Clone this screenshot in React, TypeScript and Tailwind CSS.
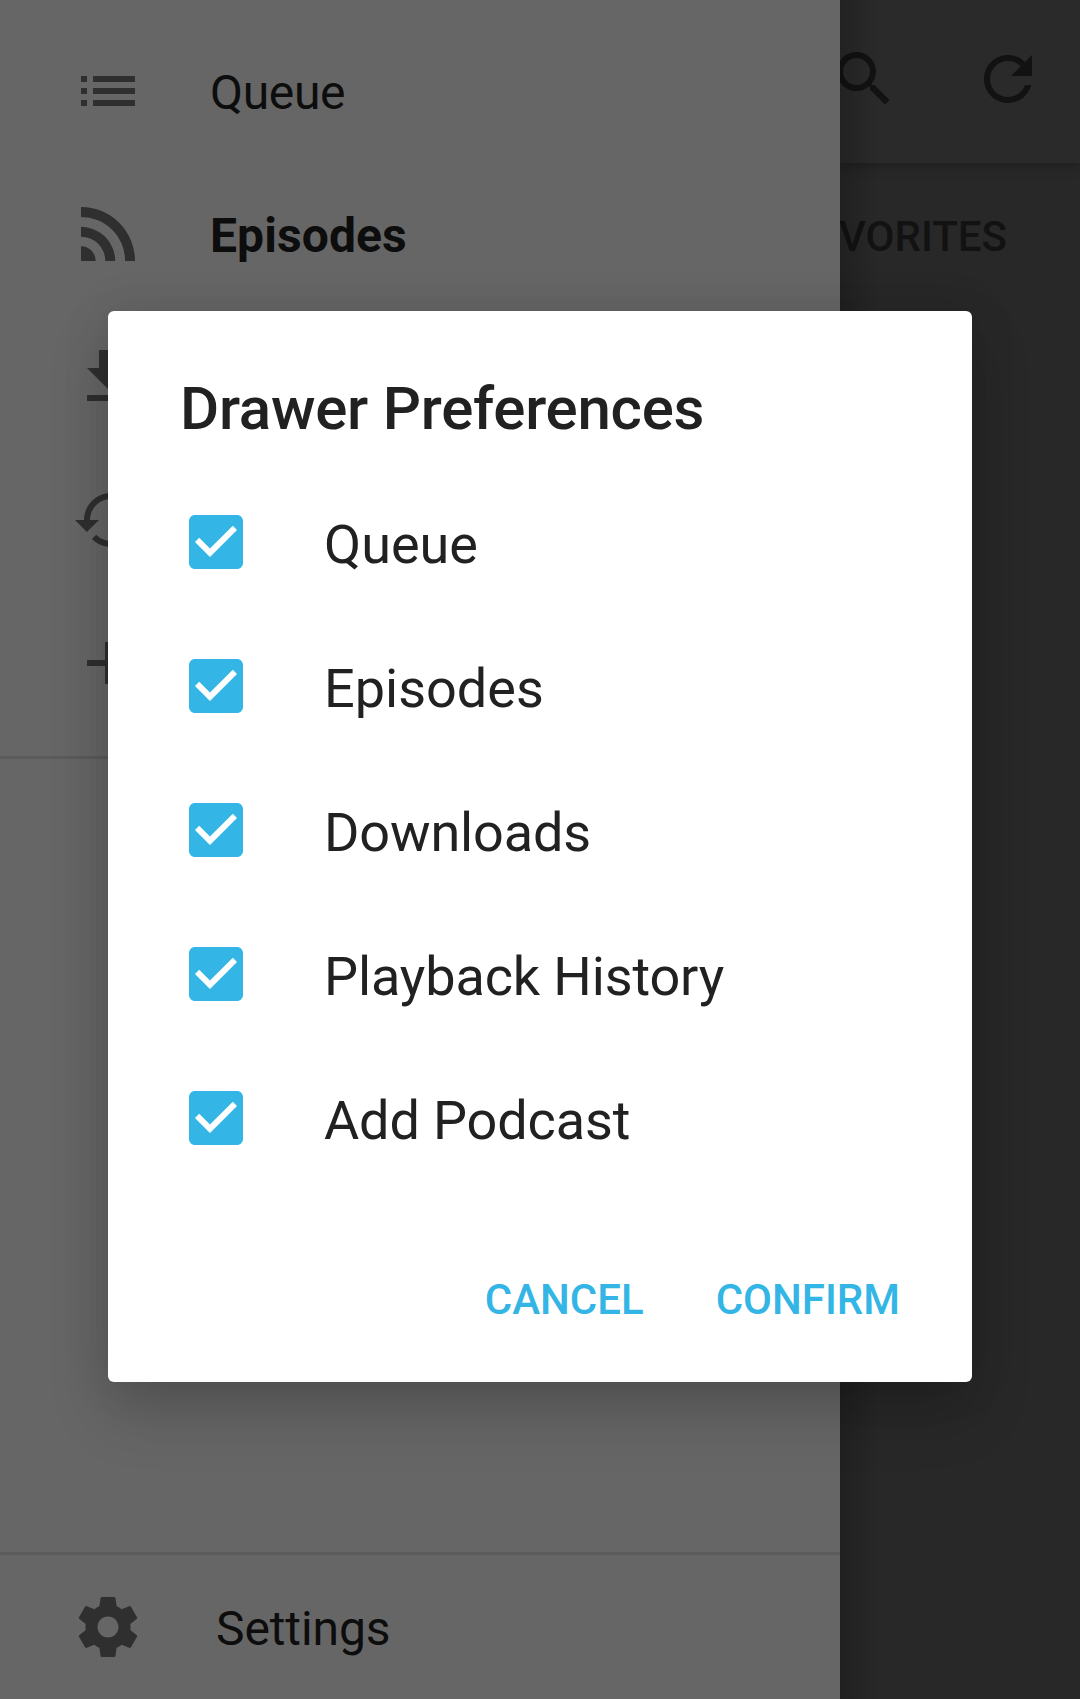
import React from "react";

const ICONS = {
  list: "M3 13h2v-2H3v2zm0 4h2v-2H3v2zm0-8h2V7H3v2zm4 4h14v-2H7v2zm0 4h14v-2H7v2zM7 7v2h14V7H7z",
  feed: "M3 16.1A4.9 4.9 0 0 1 7.9 21H3zM3 9.6A11.4 11.4 0 0 1 14.4 21H11.1A8.1 8.1 0 0 0 3 12.9zM3 3A18 18 0 0 1 21 21H17.7A14.7 14.7 0 0 0 3 6.3z",
  download: "M19 9h-4V3H9v6H5l7 7 7-7zM5 18v2h14v-2H5z",
  history:
    "M13 3c-4.97 0-9 4.03-9 9H1l3.89 3.89.07.14L9 12H6c0-3.87 3.13-7 7-7s7 3.13 7 7-3.13 7-7 7c-1.93 0-3.68-.79-4.94-2.06l-1.42 1.42C8.27 19.99 10.51 21 13 21c4.97 0 9-4.03 9-9s-4.03-9-9-9z",
  add: "M19 13h-6v6h-2v-6H5v-2h6V5h2v6h6v2z",
  search:
    "M15.5 14h-.79l-.28-.27C15.41 12.59 16 11.11 16 9.5 16 5.91 13.09 3 9.5 3S3 5.91 3 9.5 5.91 16 9.5 16c1.61 0 3.09-.59 4.23-1.57l.27.28v.79l5 4.99L20.49 19l-4.99-5zm-6 0C7.01 14 5 11.99 5 9.5S7.01 5 9.5 5 14 7.01 14 9.5 11.99 14 9.5 14z",
  refresh:
    "M17.65 6.35C16.2 4.9 14.21 4 12 4c-4.42 0-7.99 3.58-7.99 8s3.57 8 7.99 8c3.73 0 6.84-2.55 7.73-6h-2.08c-.82 2.33-3.04 4-5.65 4-3.31 0-6-2.69-6-6s2.69-6 6-6c1.66 0 3.14.69 4.22 1.78L13 11h7V4l-2.35 2.35z",
  settings:
    "M19.43 12.98c.04-.32.07-.64.07-.98s-.03-.66-.07-.98l2.11-1.65c.19-.15.24-.42.12-.64l-2-3.46c-.12-.22-.39-.3-.61-.22l-2.49 1c-.52-.4-1.08-.73-1.69-.98l-.38-2.65C14.46 2.18 14.25 2 14 2h-4c-.25 0-.46.18-.49.42l-.38 2.65c-.61.25-1.17.59-1.69.98l-2.49-1c-.23-.09-.49 0-.61.22l-2 3.46c-.13.22-.07.49.12.64l2.11 1.65c-.04.32-.07.65-.07.98s.03.66.07.98l-2.11 1.65c-.19.15-.24.42-.12.64l2 3.46c.12.22.39.3.61.22l2.49-1c.52.4 1.08.73 1.69.98l.38 2.65c.03.24.24.42.49.42h4c.25 0 .46-.18.49-.42l.38-2.65c.61-.25 1.17-.59 1.69-.98l2.49 1c.23.09.49 0 .61-.22l2-3.46c.12-.22.07-.49-.12-.64l-2.11-1.65zM12 15.5c-1.93 0-3.5-1.57-3.5-3.5s1.57-3.5 3.5-3.5 3.5 1.57 3.5 3.5-1.57 3.5-3.5 3.5z",
  checkbox:
    "M19 3H5c-1.11 0-2 .9-2 2v14c0 1.1.89 2 2 2h14c1.11 0 2-.9 2-2V5c0-1.1-.89-2-2-2zm-9 14l-5-5 1.41-1.41L10 14.17l7.59-7.59L19 8l-9 9z",
};

function Icon({ name, className = "" }: { name: keyof typeof ICONS; className?: string }) {
  return (
    <svg viewBox="0 0 24 24" fill="currentColor" className={`size-[72px] shrink-0 ${className}`}>
      <path d={ICONS[name]} />
    </svg>
  );
}

const NAV: { icon: keyof typeof ICONS; label?: string; active?: boolean }[] = [
  { icon: "list", label: "Queue" },
  { icon: "feed", label: "Episodes", active: true },
  { icon: "download" },
  { icon: "history" },
  { icon: "add" },
];

const OPTIONS = ["Queue", "Episodes", "Downloads", "Playback History", "Add Podcast"];

function Drawer() {
  return (
    <nav className="flex w-[840px] shrink-0 flex-col bg-[#666666] text-[#0d0d0d]">
      <div className="flex h-[759px] flex-col border-b-3 border-[#5b5b5b] pt-5">
        {NAV.map(({ icon, label, active }) => (
          <div key={icon} className="flex h-[143px] items-start pl-[72px]">
            <Icon name={icon} className="mt-[35px] text-[#2f2f2f]" />
            <span
              className={`ml-[66px] mt-px text-[48px] leading-[143px] ${active ? "font-bold tracking-[0.1px]" : "font-normal tracking-[-0.35px]"}`}
            >
              {label}
            </span>
          </div>
        ))}
      </div>
      <div className="mt-auto flex h-[147px] items-start border-t-3 border-[#5b5b5b] pl-[72px]">
        <Icon name="settings" className="mt-9 text-[#2f2f2f]" />
        <span className="ml-[72px] mt-[2px] text-[48px] leading-[144px] tracking-[-0.1px]">Settings</span>
      </div>
    </nav>
  );
}

function Episodes() {
  return (
    <main className="relative flex min-w-0 flex-1 flex-col overflow-hidden bg-[#282828] text-[#121212]">
      <header className="z-10 flex h-[163px] shrink-0 items-start justify-end gap-[72px] bg-[#2a2a2a] pr-9 pt-[43px] shadow-[0_3px_12px_rgba(0,0,0,0.25)]">
        <Icon name="search" />
        <Icon name="refresh" />
      </header>
      <div className="mt-[2px] flex h-36 items-center justify-end pr-[73px] text-[42px] font-medium leading-[144px]">
        FAVORITES
      </div>
      <div className="absolute inset-y-0 left-0 z-20 w-10 bg-linear-to-r from-black/20 to-transparent" />
    </main>
  );
}

function PreferencesDialog() {
  return (
    <section
      role="dialog"
      className="flex h-[1071px] w-[864px] flex-col rounded-[6px] bg-white text-[#212121] shadow-[0_30px_60px_rgba(0,0,0,0.18),0_0_48px_rgba(0,0,0,0.1)]"
    >
      <h1 className="pl-[72px] pt-[62px] text-[60px] font-medium leading-[72px] tracking-[-0.25px]">
        Drawer Preferences
      </h1>
      <ul className="mt-[25px] flex flex-col">
        {OPTIONS.map((option) => (
          <li key={option} className="flex h-36 items-center pl-[72px]">
            <Icon name="checkbox" className="text-[#33b5e5]" />
            <span
              className={`ml-[72px] mt-[5px] text-[54px] leading-[72px] ${option.length > 8 ? "tracking-[-0.13px]" : ""}`}
            >
              {option}
            </span>
          </li>
        ))}
      </ul>
      <div className="mb-[46px] mt-auto flex justify-end gap-[72px] pr-[72px] text-[42px] font-medium leading-[72px] text-[#33b5e5]">
        <button>CANCEL</button>
        <button>CONFIRM</button>
      </div>
    </section>
  );
}

export default function App() {
  return (
    <div className="relative flex h-[1699px] w-[1080px] overflow-hidden font-[Roboto,sans-serif]">
      <Drawer />
      <Episodes />
      <div className="absolute inset-0 z-30 flex items-start justify-center pt-[311px]">
        <PreferencesDialog />
      </div>
    </div>
  );
}
